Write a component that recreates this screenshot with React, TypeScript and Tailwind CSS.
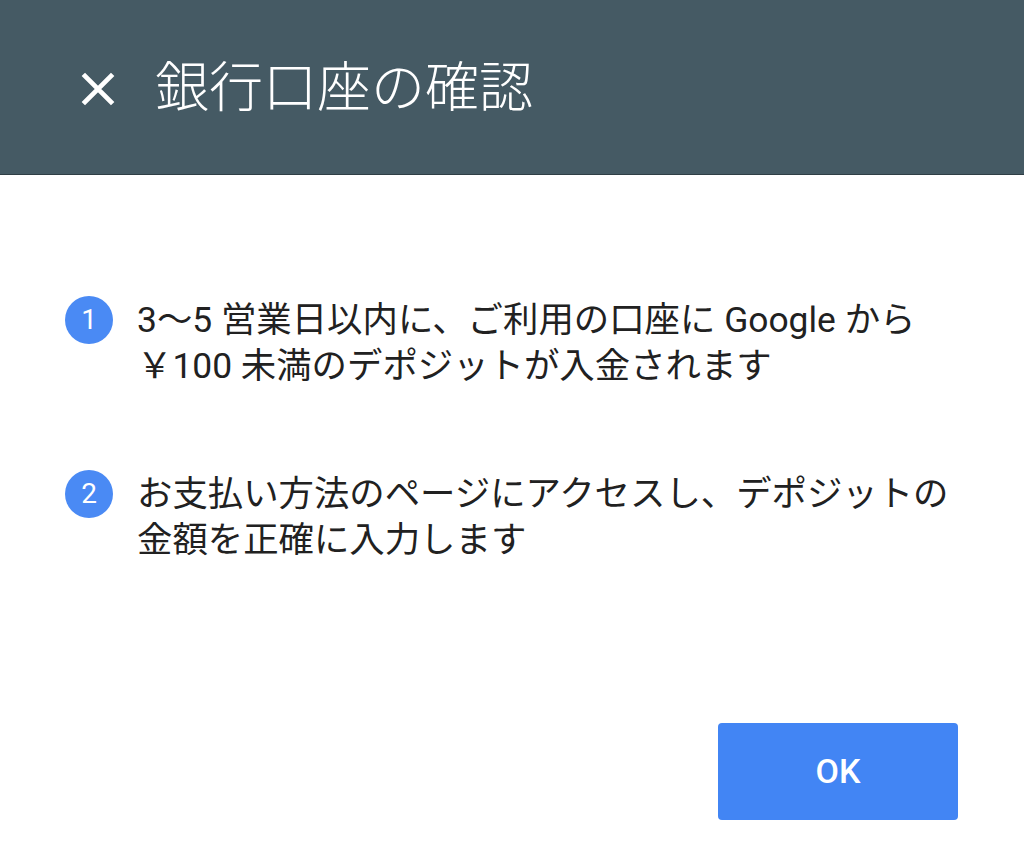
const steps = [
  ['3〜5 営業日以内に、ご利用の口座に Google から', '￥100 未満のデポジットが入金されます'],
  ['お支払い方法のページにアクセスし、デポジットの', '金額を正確に入力します'],
];

export default function App() {
  return (
    <div
      className="flex h-[862px] w-[1024px] flex-col bg-white"
      style={{ fontFamily: 'Roboto, "Noto Sans CJK JP", sans-serif' }}
    >
      <header className="flex h-[175px] items-center border-b border-[#2f3e45] bg-[#455a64] pl-[76px] pt-[4px]">
        <svg viewBox="0 0 24 24" className="h-[44px] w-[44px]" fill="none" stroke="white" strokeWidth="2.6">
          <path d="M4 4L20 20M20 4L4 20" />
        </svg>
        <h1 className="ml-[35px] text-[54px] font-light leading-none text-white">銀行口座の確認</h1>
      </header>

      <div className="flex flex-col gap-[82px] pl-[65px] pr-[40px] pt-[122px]">
        {steps.map((lines, i) => (
          <div key={i} className="flex items-start gap-[24px]">
            <div className="mt-[-1px] flex h-[48px] w-[48px] shrink-0 items-center justify-center rounded-full bg-[#4a8af4] text-[28px] text-white">
              {i + 1}
            </div>
            <p className="text-[35.4px] leading-[46px] text-[#212121]">
              {lines[0]}
              <br />
              {lines[1]}
            </p>
          </div>
        ))}
      </div>

      <div className="mt-auto flex justify-end pb-[42px] pr-[66px]">
        <button className="h-[97px] w-[240px] rounded-[4px] bg-[#4285f4] text-[34px] font-medium text-white">
          OK
        </button>
      </div>
    </div>
  );
}
